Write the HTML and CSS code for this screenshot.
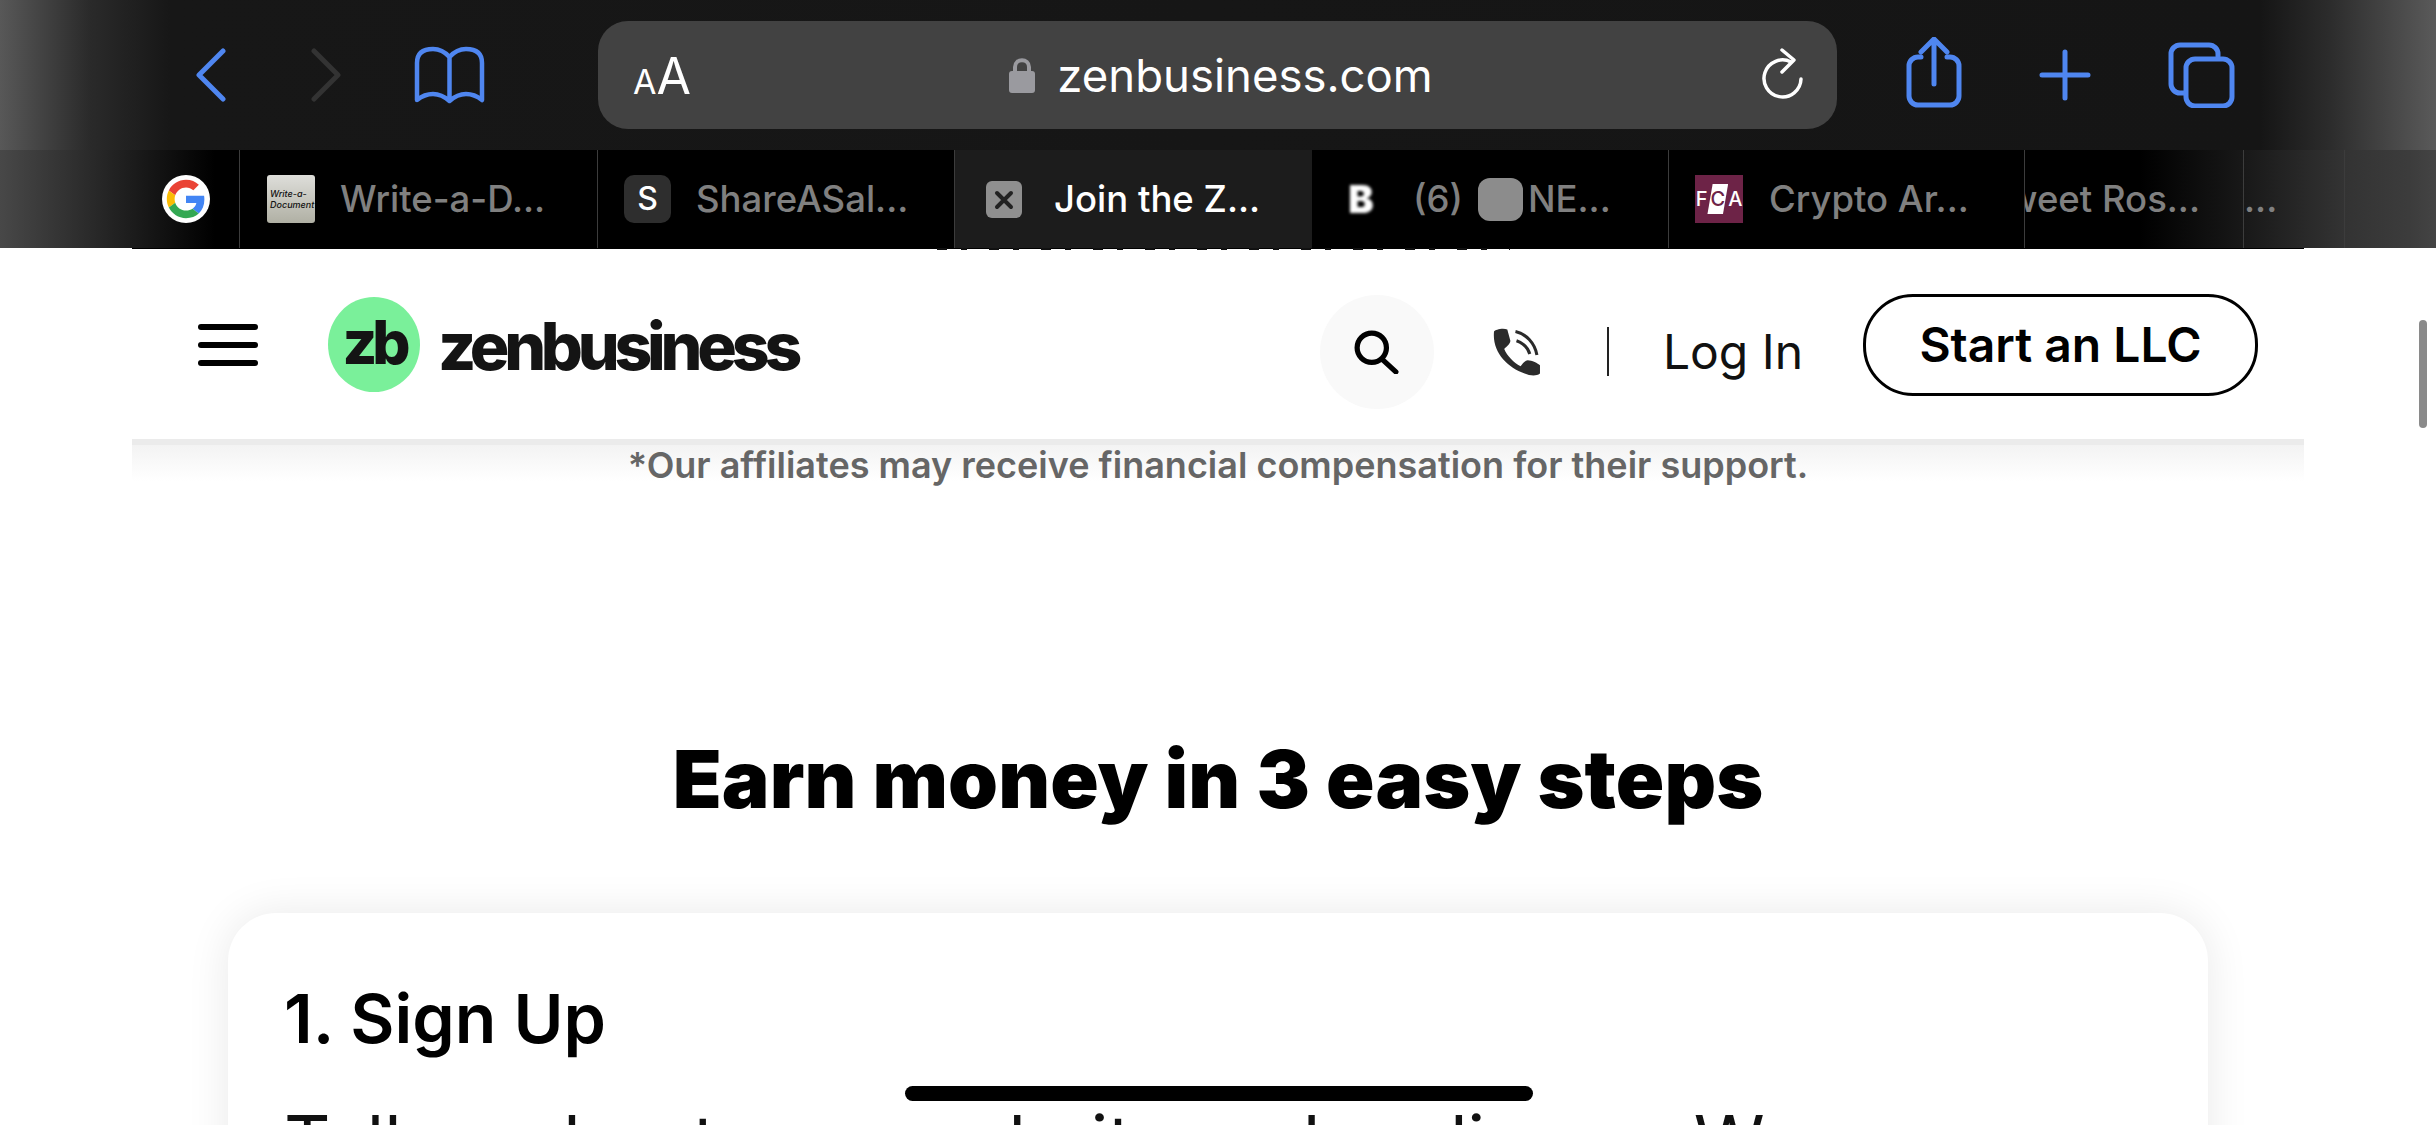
FILE: index.html

```html
<!DOCTYPE html>
<html>
<head>
  <title>Join the ZenBusiness Affiliate Program</title>
  <link rel="stylesheet" href="styles.css">
</head>
<body>
  <div class="toolbar">
    <svg class="back" viewBox="0 0 30 54"><polyline points="27,3 3,27 27,51"/></svg>
    <svg class="forward" viewBox="0 0 30 54"><polyline points="3,3 27,27 3,51"/></svg>
    <svg class="book" viewBox="0 0 71 58"><path d="M35.5 11C31 6 26 3 19 3 9 3 3 7 3 17V54C8 50 13 48 19 48 26 48 31 51 35.5 55 40 51 45 48 52 48 58 48 63 50 68 54V17C68 7 62 3 52 3 45 3 40 6 35.5 11ZM35.5 11V55"/></svg>

    <div class="urlbar">
      <div class="aa"><span class="aa-small">A</span><span class="aa-big">A</span></div>
      <div class="url">
        <svg class="lock" viewBox="0 0 26 36"><path class="lock-loop" d="M6 16V10C6 1 20 1 20 10V16"/><rect y="14" width="26" height="22" rx="3"/></svg>
        <span>zenbusiness.com</span>
      </div>
      <div class="reload-wrap">
        <svg class="reload" viewBox="0 0 42 54"><path d="M39 31A18.500 18.500 0 1 1 29 14"/><polyline points="20,2 32,12 20,24"/></svg>
      </div>
    </div>

    <svg class="share" viewBox="0 0 56 71"><path d="M15 20H12A9 9 0 0 0 3 29V59A9 9 0 0 0 12 68H44A9 9 0 0 0 53 59V29A9 9 0 0 0 44 20H41"/><path d="M28 47V3M15 15L28 2 41 15"/></svg>
    <svg class="plus" viewBox="0 0 52 52"><path d="M26 3V49M3 26H49"/></svg>
    <svg class="tabs-icon" viewBox="0 0 67 66"><path d="M50 14V12A9 9 0 0 0 41 3H12A9 9 0 0 0 3 12V42A9 9 0 0 0 12 51H17"/><rect x="18" y="17" width="46" height="47" rx="9"/></svg>
  </div>

  <div class="tabbar">
    <div class="tab tab-google">
      <svg class="favicon" viewBox="-6 -6 60 60">
        <circle cx="24" cy="24" r="30" fill="#fff"/>
        <path fill="#EA4335" d="M24 9.500c3.540 0 6.710 1.220 9.210 3.600l6.850-6.850C35.900 2.380 30.470 0 24 0 14.620 0 6.510 5.380 2.560 13.220l7.980 6.190C12.430 13.720 17.740 9.500 24 9.500z"/>
        <path fill="#4285F4" d="M46.980 24.550c0-1.570-.15-3.090-.38-4.550H24v9.020h12.940c-.58 2.960-2.260 5.480-4.780 7.180l7.730 6c4.510-4.180 7.090-10.360 7.090-17.650z"/>
        <path fill="#FBBC05" d="M10.530 28.590c-.48-1.450-.76-2.990-.76-4.590s.27-3.140.76-4.590l-7.980-6.190C.92 16.460 0 20.120 0 24c0 3.880.92 7.540 2.560 10.780l7.970-6.190z"/>
        <path fill="#34A853" d="M24 48c6.480 0 11.930-2.130 15.890-5.810l-7.730-6c-2.150 1.450-4.920 2.300-8.160 2.300-6.260 0-11.570-4.220-13.470-9.910l-7.980 6.190C6.510 42.620 14.620 48 24 48z"/>
      </svg>
    </div>
    <div class="tab">
      <div class="fav-doc"><span>Write-a-</span><span>Document</span></div>
      <span>Write-a-D...</span>
    </div>
    <div class="tab tab-share">
      <div class="fav-s">S</div>
      <span>ShareASal...</span>
    </div>
    <div class="tab tab-active">
      <svg class="fav-x" viewBox="0 0 36 37"><rect width="36" height="37" rx="6"/><path d="M11 12L25 26M25 12L11 26"/></svg>
      <span>Join the Z...</span>
    </div>
    <div class="tab tab-b">
      <div class="fav-b">B</div>
      <span>(6)</span>
      <div class="grey-box"></div>
      <span class="ne">NE...</span>
    </div>
    <div class="tab tab-fca">
      <div class="fav-fca"><span>F</span><span class="fca-c">C</span><span>A</span></div>
      <span>Crypto Ar...</span>
    </div>
    <div class="tab tab-tweet"><span>Tweet Ros...</span></div>
    <div class="tab tab-dots"><span>...</span></div>
    <div class="tab tab-empty"></div>
    <div class="tab tab-last"></div>
  </div>
  <div class="peek"><div class="peek-text"></div></div>

  <div class="page">
    <div class="site-header">
      <div class="burger"><i></i><i></i><i></i></div>
      <div class="logo-mark">zb</div>
      <div class="logo-name">zenbusiness</div>
      <div class="header-tools">
        <div class="search-btn">
          <svg viewBox="0 0 43 42"><circle cx="17" cy="17" r="14"/><path d="M27 28L40 40"/></svg>
        </div>
        <svg class="phone" viewBox="14 5 47 48">
          <path class="phone-body" d="M15 9C16 7 24 5 28 7L31 18C31 21 27 24 25 26 28 33 34 39 41 43 43 40 46 37 48 37 52 37 58 40 60 42L60 50C56 53 50 52 45 50 28 44 13 29 15 9Z"/>
          <path class="phone-wave" d="M36 9C46 11 55 20 57 32M37 18C43 20 48 24 50 31"/>
        </svg>
        <div class="divider"></div>
        <a class="login">Log In</a>
      </div>
      <a class="start-btn">Start an LLC</a>
    </div>

    <div class="note">*Our affiliates may receive financial compensation for their support.</div>

    <h1>Earn money in 3 easy steps</h1>

    <div class="card">
      <h2>1. Sign Up</h2>
      <p>Tell us about your website and audience. We</p>
    </div>
  </div>

  <div class="scrollbar"></div>
  <div class="home-bar"></div>
</body>
</html>
```

FILE: styles.css

```css
html, body {
  margin: 0;
  height: 1125px;
  overflow: hidden;
}
body {
  background: #fff;
  font-family: Inter, "Liberation Sans", sans-serif;
  position: relative;
}

/* top toolbar */
.toolbar {
  height: 150px;
  display: flex;
  align-items: center;
  padding-left: 196px;
  box-sizing: border-box;
  background: linear-gradient(90deg, #585858 0, #2a2a2a 90px, #171717 170px, #151515 2260px, #2c2c2c 2330px, #5a5a5a 2436px);
}
.toolbar svg {
  fill: none;
  stroke: #4f86f0;
  stroke-width: 5;
  stroke-linecap: round;
  stroke-linejoin: round;
  flex: none;
}
.back, .forward {
  width: 30px;
  height: 54px;
}
.forward {
  margin-left: 85px;
}
.toolbar .forward {
  stroke: #333;
}
.book {
  width: 71px;
  height: 58px;
  margin-left: 73px;
}
.toolbar .book {
  stroke-width: 4.5;
}
.urlbar {
  width: 1239px;
  height: 108px;
  margin-left: 113px;
  border-radius: 30px;
  background: #424242;
  display: flex;
  align-items: center;
  color: #fff;
  flex: none;
}
.aa {
  flex: 1;
  padding-left: 35px;
  display: flex;
  align-items: baseline;
  position: relative;
  top: 1px;
}
.aa-small {
  font-size: 34px;
}
.aa-big {
  font-size: 50px;
}
.url {
  display: flex;
  align-items: center;
  gap: 22px;
  font-size: 45.5px;
  margin-left: 5px;
}
.toolbar .lock {
  width: 26px;
  height: 36px;
  fill: #9a9a9f;
  stroke: none;
}
.toolbar .lock .lock-loop {
  fill: none;
  stroke: #9a9a9f;
  stroke-width: 4;
}
.reload-wrap {
  flex: 1;
  display: flex;
  justify-content: flex-end;
  padding-right: 33px;
}
.toolbar .reload {
  width: 42px;
  height: 54px;
  stroke: #fff;
  stroke-width: 3.500;
}
.share {
  width: 56px;
  height: 71px;
  margin-left: 69px;
  margin-bottom: 5px;
}
.plus {
  width: 52px;
  height: 52px;
  margin-left: 77px;
}
.tabs-icon {
  width: 67px;
  height: 66px;
  margin-left: 77px;
}

/* tab strip */
.tabbar {
  height: 98px;
  display: flex;
  background: linear-gradient(90deg, #484848 0, #2a2a2a 90px, #000 215px, #000 2140px, #181818 2243px, #333 2344px, #3c3c3c 2409px, #444 2436px);
  color: #808080;
  font-size: 36.5px;
  font-weight: 500;
}
.tab {
  width: 358px;
  box-sizing: border-box;
  display: flex;
  align-items: center;
  gap: 25px;
  padding: 0 0 0 27px;
  border-right: 1px solid #3c3c3c;
  white-space: nowrap;
  overflow: hidden;
  flex: none;
}
.tab span {
  flex: none;
}
.tab-google {
  width: 240px;
  justify-content: flex-end;
  padding: 0 29px 0 0;
}
.favicon {
  width: 48px;
  height: 48px;
}
.fav-doc {
  width: 48px;
  height: 48px;
  border-radius: 3px;
  background: linear-gradient(#dededa, #b0b0a4);
  color: #111;
  font-size: 9px;
  font-style: italic;
  font-weight: 500;
  line-height: 11px;
  display: flex;
  flex-direction: column;
  justify-content: center;
  padding-left: 3px;
  box-sizing: border-box;
}
.tab-share {
  width: 357px;
  padding-left: 26px;
}
.fav-s {
  width: 47px;
  height: 48px;
  border-radius: 10px;
  background: #2e2e2e;
  color: #fff;
  font-size: 32px;
  text-align: center;
  line-height: 48px;
}
.tab-active {
  width: 357px;
  padding-left: 31px;
  gap: 32px;
  background: #1c1c1c;
  color: #fff;
  border-right: none;
}
.fav-x {
  width: 36px;
  height: 37px;
}
.fav-x rect {
  fill: #8f8f8f;
}
.fav-x path {
  fill: none;
  stroke: #222;
  stroke-width: 4;
  stroke-linecap: round;
}
.tab-b {
  width: 357px;
  gap: 0;
}
.fav-b {
  width: 44px;
  height: 46px;
  margin-right: 30px;
  color: #fff;
  font-size: 38px;
  font-weight: 900;
  text-align: center;
  line-height: 46px;
  filter: blur(1.600px);
}
.grey-box {
  width: 45px;
  height: 43px;
  border-radius: 12px;
  background: #8c8c8c;
  margin-left: 15px;
}
.ne {
  margin-left: 5px;
}
.tab-fca {
  width: 356px;
  padding-left: 26px;
  gap: 26px;
}
.fav-fca {
  width: 48px;
  height: 48px;
  background: #6d2347;
  color: #fff;
  font-size: 20px;
  font-weight: 500;
  display: flex;
  align-items: center;
  justify-content: center;
}
.fca-c {
  background: #fff;
  color: #6d2347;
  padding: 3px 3px;
  clip-path: polygon(25% 0, 100% 0, 75% 100%, 0 100%);
}
.tab-tweet {
  width: 219px;
  justify-content: flex-end;
  padding: 0 43px 0 0;
}
.tab-dots {
  width: 101px;
  padding-left: 0;
}
.tab-empty {
  width: 65px;
}
.tab-last {
  width: 27px;
  border-right: none;
}

/* bits of the page sliding under the tab strip */
.peek {
  height: 2px;
  background: linear-gradient(#000 1px, #fff 1px);
  margin: 0 132px;
  display: flex;
  justify-content: flex-start;
}
.peek-text {
  width: 573px;
  height: 2px;
  margin-left: 805px;
  background: repeating-linear-gradient(90deg, #111 0 10px, transparent 10px 24px, #111 24px 30px, transparent 30px 52px);
}

/* page */
.page {
  margin: 0 132px;
}
.site-header {
  height: 189px;
  display: flex;
  align-items: center;
  padding: 0 46px 0 66px;
}
.burger {
  width: 60px;
  height: 42px;
  display: flex;
  flex-direction: column;
  justify-content: space-between;
}
.burger i {
  height: 6px;
  border-radius: 3px;
  background: #000;
}
.logo-mark {
  width: 92px;
  height: 95px;
  margin-left: 70px;
  border-radius: 50%;
  background: #7af09a;
  color: #141414;
  font-size: 60px;
  font-weight: 800;
  letter-spacing: -5px;
  text-align: center;
  line-height: 90px;
}
.logo-name {
  margin-left: 18px;
  color: #141414;
  font-size: 66px;
  font-weight: 800;
  letter-spacing: -5.2px;
  padding-top: 2px;
}
.header-tools {
  margin-left: auto;
  margin-top: 14px;
  display: flex;
  align-items: center;
}
.search-btn {
  width: 114px;
  height: 114px;
  border-radius: 50%;
  background: #f9f9f9;
  display: flex;
  align-items: center;
  justify-content: center;
}
.search-btn svg {
  width: 45px;
  height: 44px;
  fill: none;
  stroke: #000;
  stroke-width: 5;
  stroke-linecap: round;
}
.phone {
  width: 48px;
  height: 50px;
  margin-left: 59px;
}
.phone-body {
  fill: #2b2b2b;
}
.phone-wave {
  fill: none;
  stroke: #2b2b2b;
  stroke-width: 3;
}
.divider {
  width: 2px;
  height: 49px;
  margin-left: 66px;
  background: #222;
}
.login {
  margin-left: 54px;
  font-size: 48px;
  color: #111;
}
.start-btn {
  width: 395px;
  height: 102px;
  margin-left: 60px;
  box-sizing: border-box;
  border: 3px solid #000;
  border-radius: 50px;
  font-size: 48px;
  font-weight: 600;
  color: #000;
  display: flex;
  align-items: center;
  justify-content: center;
}
.note {
  height: 60px;
  padding-top: 4px;
  box-sizing: border-box;
  background: linear-gradient(#ebebeb 6px, #f3f3f3 6px, #fff 42px);
  color: #666;
  font-size: 36px;
  font-weight: 600;
  text-align: center;
}
h1 {
  margin: 220px 0 0;
  height: 120px;
  line-height: 120px;
  font-size: 80px;
  font-weight: 900;
  letter-spacing: 0.1px;
  color: #000;
  text-align: center;
}
.card {
  margin: 74px 96px 0;
  height: 400px;
  padding: 62px 56px;
  box-sizing: border-box;
  border-radius: 48px;
  background: #fff;
  box-shadow: 0 0 44px rgba(0, 0, 0, 0.09);
}
h2 {
  margin: 0;
  font-size: 68px;
  line-height: 86px;
  font-weight: 600;
  color: #000;
}
.card p {
  margin: 45px 0 0;
  font-size: 72px;
  line-height: 70px;
  white-space: nowrap;
  color: #111;
}

/* overlays */
.scrollbar {
  position: absolute;
  left: 2419px;
  top: 320px;
  width: 8px;
  height: 108px;
  border-radius: 4px;
  background: #8a8a8a;
}
.home-bar {
  position: absolute;
  left: 905px;
  top: 1086px;
  width: 628px;
  height: 15px;
  border-radius: 8px;
  background: #000;
}
```
